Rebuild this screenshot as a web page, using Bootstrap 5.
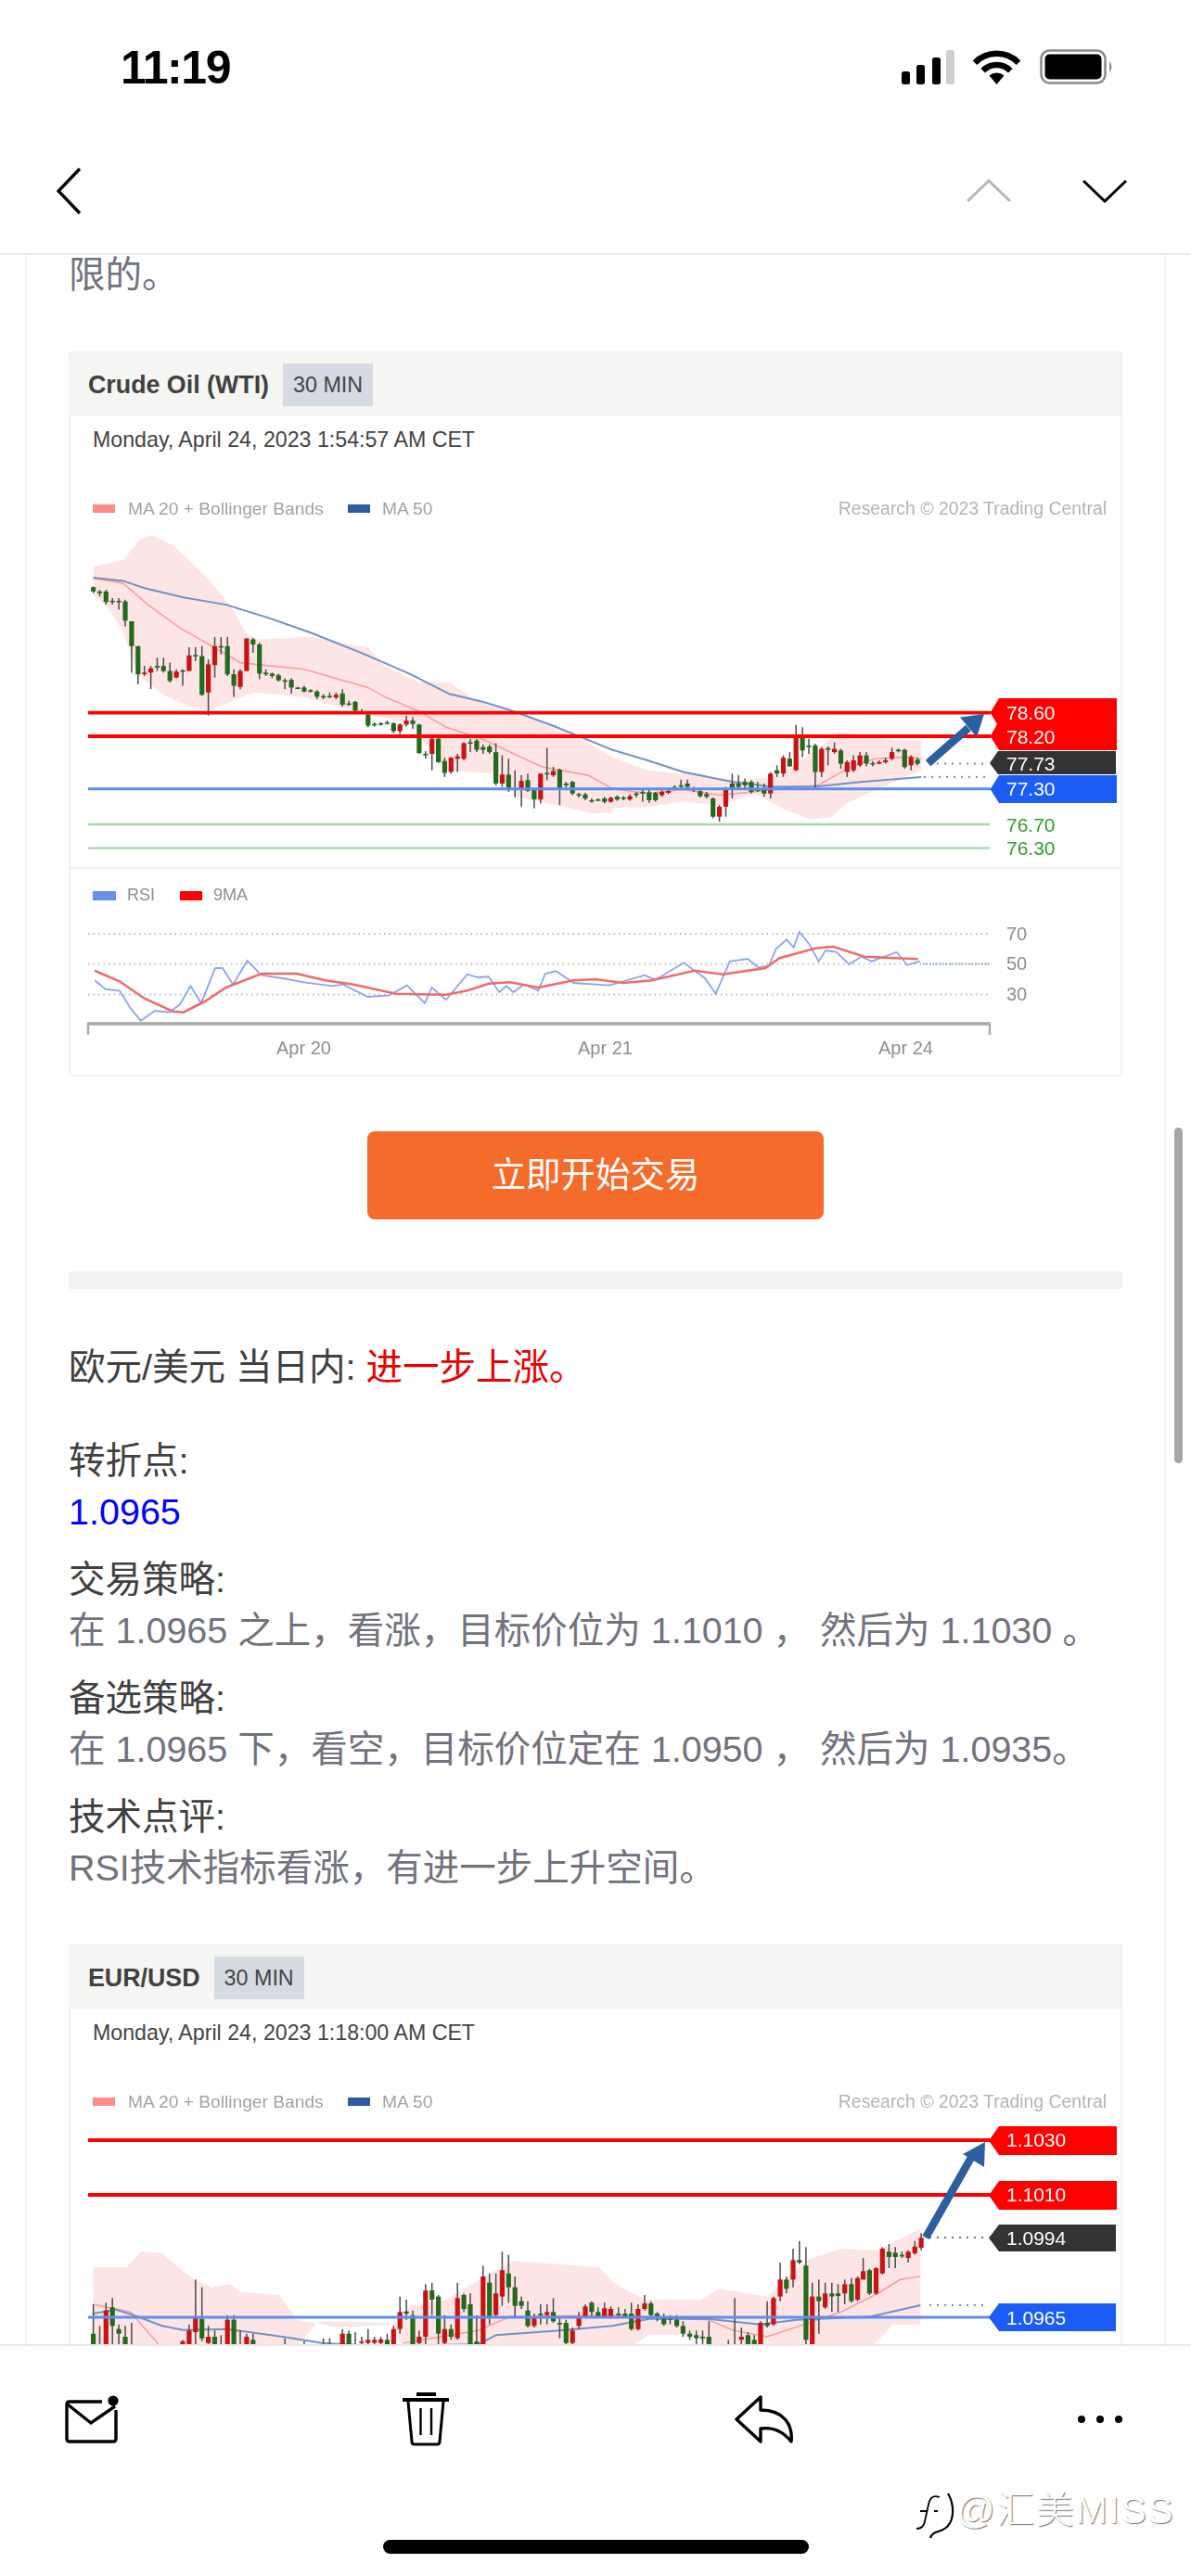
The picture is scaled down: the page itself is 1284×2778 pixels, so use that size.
<!DOCTYPE html>
<html lang="zh">
<head>
<meta charset="utf-8">
<title>邮件</title>
<link rel="stylesheet" href="https://cdn.jsdelivr.net/npm/bootstrap@5.3.0/dist/css/bootstrap.min.css">
<style>
html,body{margin:0;background:#fff}
body{font-family:"Liberation Sans","Noto Sans CJK SC",sans-serif;color:#3c3c3c}
.app-shell{width:1284px;height:2778px;overflow:hidden;position:relative;background:#fff}
.status-row{height:146px;padding:0 82px 0 130px}
.clock{font-size:50px;font-weight:700;color:#000;letter-spacing:-1.4px;line-height:1}
.nav-row{height:129px;padding:0 69px 8px 61px;border-bottom:2px solid #ececec}
.chev-up{margin-right:29px}
.mail-scroll{flex:1 1 auto;min-height:0;overflow:hidden;position:relative}
.mail-frame{margin:0 27px;border-left:2px solid #f0f0f2;border-right:2px solid #f0f0f2;padding:0 45px;min-height:2400px}
.scroll-thumb{position:absolute;left:1266px;top:941px;width:9px;height:362px;border-radius:5px;background:#a6a6a6}
.txt{font-size:39.5px;line-height:55px;margin:0;white-space:nowrap}
.txt-dark{color:#404040}
.txt-grey{color:#72727e}
.txt-red{color:#e60000}
.txt-blue{color:#0000ff}
.first-line{margin-top:-6px}
.chart-card{border:2px solid #f0f3f5;border-radius:0;margin-top:55px;width:1136px}
.chart-head{height:68px;background:#f5f5f3;border:0;border-radius:0!important;padding:0 0 0 19px;gap:15px}
.chart-title{font-size:26.8px;font-weight:700;color:#404040}
.chart-tag{font-size:23.3px;height:46px;line-height:46px;padding:0 11px;background:#d6dae2;color:#444}
.chart-date{height:50px;line-height:50px;font-size:23.2px;color:#444;padding-left:24px}
.chart-draw{display:block;width:1132px;filter:blur(.45px)}
.chart-draw text{font-family:"Liberation Sans",sans-serif}
.chart-one{height:660px}
.chart-two{height:340px}
.cta{display:block;width:492px;height:95px;margin:59px auto 0;background:#f46b2b;border:0;border-radius:8px;color:#fff;font-size:37.5px;line-height:95px;padding:0}
.cta:hover{background:#f46b2b;color:#fff}
.rule-bar{height:19px;background:#f2f2f2;margin-top:56px}
.gap-a{margin-top:57px}
.gap-b{margin-top:46px}
.gap-c{margin-top:18px}
.mail-foot{height:250px;border-top:2px solid #e8e8e8;background:#fff;position:relative;flex:0 0 auto}
.foot-icons{padding:50px 73px 0 70px;height:108px}
.home-pill{width:459px;height:15px;border-radius:8px;background:#000;margin:101px auto 0}
.mark-logo{position:absolute;left:987px;top:157px}
.mark-text{position:absolute;left:1031px;top:154px;font-size:41px;letter-spacing:1.6px;line-height:46px;font-weight:300;color:#fff;text-shadow:1px 1px 1px rgba(0,0,0,.55);white-space:nowrap}
</style>
</head>
<body>
<div class="app-shell d-flex flex-column">
  <div class="status-row d-flex align-items-center justify-content-between flex-shrink-0">
    <span class="clock">11:19</span>
    <svg width="230" height="46" viewBox="973 50 230 46" aria-hidden="true">
      <rect x="973" y="77" width="9" height="14" rx="2.5" fill="#000"/>
      <rect x="989" y="70" width="9" height="21" rx="2.5" fill="#000"/>
      <rect x="1006" y="62" width="9" height="29" rx="2.5" fill="#000"/>
      <rect x="1021" y="54" width="9" height="37" rx="2.5" fill="#cfcfcf"/>
      <path d="M1052 67.7A33 33 0 0 1 1099 67.7M1060.7 76.2A21 21 0 0 1 1090.3 76.2" fill="none" stroke="#000" stroke-width="6.5"/>
      <path d="M1075.5 91L1067.5 81.5A12 12 0 0 1 1083.5 81.5Z" fill="#000"/>
      <rect x="1123.5" y="54.5" width="69" height="35" rx="9" fill="none" stroke="#8a8a8a" stroke-width="2.5"/>
      <rect x="1127.5" y="58.5" width="61" height="27" rx="5" fill="#000"/>
      <path d="M1197 66Q1202 72 1197 78Z" fill="#8a8a8a"/>
    </svg>
  </div>
  <div class="nav-row d-flex align-items-center justify-content-between flex-shrink-0">
    <svg width="28" height="52" viewBox="0 0 28 52" aria-hidden="true"><path d="M25 2L2 26L25 50" fill="none" stroke="#000" stroke-width="3.4"/></svg>
    <div class="d-flex align-items-center gap-5">
      <svg width="48" height="26" viewBox="0 0 48 26" class="chev-up" aria-hidden="true"><path d="M1 24L24 2L47 24" fill="none" stroke="#b5b5b5" stroke-width="3"/></svg>
      <svg width="48" height="26" viewBox="0 0 48 26" aria-hidden="true"><path d="M1 2L24 24L47 2" fill="none" stroke="#000" stroke-width="3"/></svg>
    </div>
  </div>

  <div class="mail-scroll">
    <div class="mail-frame">
      <p class="txt txt-grey first-line">限的。</p>

      <div class="card chart-card">
        <div class="card-header chart-head d-flex align-items-center">
          <span class="chart-title">Crude Oil (WTI)</span><span class="chart-tag">30 MIN</span>
        </div>
        <div class="chart-date">Monday, April 24, 2023 1:54:57 AM CET</div>
        <svg id="oil" class="chart-draw chart-one" viewBox="76 499 1132 660" aria-label="Crude Oil chart">
          <g id="oil-plot"></g>
          <g font-size="19.2" fill="#a2a2a2">
            <rect x="100" y="544" width="24" height="9" fill="#ff8a8a"/>
            <text x="138" y="555">MA 20 + Bollinger Bands</text>
            <rect x="375" y="544" width="24" height="9" fill="#2e5c9e"/>
            <text x="412" y="555">MA 50</text>
            <text x="1193" y="555" text-anchor="end" font-size="19.4" fill="#b4b4b4">Research © 2023 Trading Central</text>
          </g>
          <g fill="none">
            <path d="M95 768.6H1068M95 794H1068" stroke="#ff0000" stroke-width="3.8"/>
            <path d="M95 850.7H1068" stroke="#5b8ef0" stroke-width="3"/>
            <path d="M95 889H1067M95 914.6H1067" stroke="#a6d8a6" stroke-width="2.4"/>
            <path d="M1002 823.6H1066" stroke="#888" stroke-width="2" stroke-dasharray="2 6"/>
            <path d="M996 838H1066" stroke="#6c8fe0" stroke-width="2" stroke-dasharray="2 6"/>
          </g>
          <path d="M1067.6 768.6L1077 753H1204V809H1077L1067.6 794L1075 781Z" fill="#ff0000"/>
          <path d="M1067 823L1076 810H1203V835H1076Z" fill="#333"/>
          <path d="M1067.6 851L1077 836H1204V866H1077Z" fill="#1a5cf5"/>
          <path d="M1000.6 823L1044 785" stroke="#2c5f9e" stroke-width="8.5" fill="none"/>
          <path d="M1061 770L1035 773.5L1053 795Z" fill="#2c5f9e"/>
          <g font-size="21" fill="#fff">
            <text x="1085" y="776">78.60</text>
            <text x="1085" y="802">78.20</text>
            <text x="1085" y="831">77.73</text>
            <text x="1085" y="858">77.30</text>
            <text x="1085" y="897" fill="#2e9e2e">76.70</text>
            <text x="1085" y="922" fill="#2e9e2e">76.30</text>
          </g>
          <path d="M76 936H1208" stroke="#edf1f4" stroke-width="2.5"/>
          <g font-size="18" fill="#8e8e8e">
            <rect x="100" y="961" width="25" height="10" fill="#6c8fe8"/>
            <text x="137" y="971">RSI</text>
            <rect x="194" y="961" width="24" height="10" fill="#ff0000"/>
            <text x="230" y="971">9MA</text>
          </g>
          <path d="M95 1007H1067M95 1039.5H1067M95 1072.5H1067" stroke="#bdbdbd" stroke-width="2" stroke-dasharray="1.5 4" fill="none"/>
          <path d="M995 1039.5H1067" stroke="#7d9ee8" stroke-width="2" stroke-dasharray="1.5 2"/>
          <polyline id="rsi-blue" fill="none" stroke="#8aa6ec" stroke-width="1.8"/>
          <polyline id="rsi-red" fill="none" stroke="#f26a6a" stroke-width="2.6"/>
          <path d="M95 1116V1104H1067V1116" fill="none" stroke="#ababab" stroke-width="2.4"/>
          <path d="M95 1104H1067" stroke="#ababab" stroke-width="3.6"/>
          <g font-size="20" fill="#8e8e8e">
            <text x="1085" y="1014">70</text>
            <text x="1085" y="1046">50</text>
            <text x="1085" y="1079">30</text>
            <text x="298" y="1137">Apr 20</text>
            <text x="623" y="1137">Apr 21</text>
            <text x="947" y="1137">Apr 24</text>
          </g>
        </svg>
      </div>

      <a class="btn cta" href="#">立即开始交易</a>
      <div class="rule-bar"></div>

      <p class="txt txt-dark gap-a">欧元/美元 当日内: <span class="txt-red">进一步上涨。</span></p>
      <p class="txt txt-dark gap-b">转折点:</p>
      <p class="txt txt-blue">1.0965</p>
      <p class="txt txt-dark gap-c">交易策略:</p>
      <p class="txt txt-grey">在 1.0965 之上，看涨，目标价位为 1.1010 ， 然后为 1.1030 。</p>
      <p class="txt txt-dark gap-c">备选策略:</p>
      <p class="txt txt-grey">在 1.0965 下，看空，目标价位定在 1.0950 ， 然后为 1.0935。</p>
      <p class="txt txt-dark gap-c">技术点评:</p>
      <p class="txt txt-grey">RSI技术指标看涨，有进一步上升空间。</p>

      <div class="card chart-card">
        <div class="card-header chart-head d-flex align-items-center">
          <span class="chart-title">EUR/USD</span><span class="chart-tag">30 MIN</span>
        </div>
        <div class="chart-date">Monday, April 24, 2023 1:18:00 AM CET</div>
        <svg id="eur" class="chart-draw chart-two" viewBox="76 2217 1132 340" aria-label="EUR/USD chart">
          <g id="eur-plot"></g>
          <g font-size="19.2" fill="#a2a2a2">
            <rect x="100" y="2262" width="24" height="9" fill="#ff8a8a"/>
            <text x="138" y="2273">MA 20 + Bollinger Bands</text>
            <rect x="375" y="2262" width="24" height="9" fill="#2e5c9e"/>
            <text x="412" y="2273">MA 50</text>
            <text x="1193" y="2273" text-anchor="end" font-size="19.4" fill="#b4b4b4">Research © 2023 Trading Central</text>
          </g>
          <g fill="none">
            <path d="M95 2308H1068M95 2367H1068" stroke="#ff0000" stroke-width="3.8"/>
            <path d="M95 2499H1068" stroke="#5b8ef0" stroke-width="3"/>
            <path d="M1002 2413H1066" stroke="#7a6a80" stroke-width="2" stroke-dasharray="2 6"/>
            <path d="M1002 2486H1066" stroke="#6c8fe0" stroke-width="2" stroke-dasharray="2 6"/>
          </g>
          <path d="M1066 2308.5L1077 2293H1204V2324H1077Z" fill="#ff0000"/>
          <path d="M1066 2367.5L1077 2352H1204V2383H1077Z" fill="#ff0000"/>
          <path d="M1066 2413.5L1077 2399H1203V2428H1077Z" fill="#333"/>
          <path d="M1066 2499L1077 2484H1203V2514H1077Z" fill="#1a5cf5"/>
          <path d="M998 2413L1048 2325" stroke="#2c5f9e" stroke-width="8.5" fill="none"/>
          <path d="M1062 2310L1038 2323L1061 2337Z" fill="#2c5f9e"/>
          <g font-size="21" fill="#fff">
            <text x="1085" y="2315">1.1030</text>
            <text x="1085" y="2374">1.1010</text>
            <text x="1085" y="2421">1.0994</text>
            <text x="1085" y="2507">1.0965</text>
          </g>
        </svg>
      </div>
    </div>
    <div class="scroll-thumb"></div>
  </div>

  <div class="mail-foot">
    <div class="foot-icons d-flex align-items-center justify-content-between">
      <svg width="58" height="52" viewBox="0 0 58 52" aria-hidden="true">
        <path d="M40 7H5Q2 7 2 10V47Q2 50 5 50H52Q55 50 55 47V16" fill="none" stroke="#000" stroke-width="3.4"/>
        <path d="M3 10L28 30L54 12" fill="none" stroke="#000" stroke-width="3.4"/>
        <circle cx="52" cy="6" r="5.6" fill="#000"/>
      </svg>
      <svg width="52" height="58" viewBox="0 0 52 58" aria-hidden="true">
        <rect x="16" y="0" width="21" height="4" fill="#000"/>
        <rect x="1" y="6" width="50" height="4" fill="#000"/>
        <path d="M7 10L11 53Q11 56 14 56H38Q41 56 41 53L45 10" fill="none" stroke="#000" stroke-width="3"/>
        <path d="M20.5 17V46M32 17V46" stroke="#000" stroke-width="2.4"/>
      </svg>
      <svg width="66" height="52" viewBox="0 0 66 52" aria-hidden="true">
        <path d="M30 2L4 26L30 50V36C44 34 55 40 63 50C65 32 55 16 30 16Z" fill="none" stroke="#000" stroke-width="3.4" stroke-linejoin="round"/>
      </svg>
      <svg width="50" height="10" viewBox="0 0 50 10" aria-hidden="true">
        <circle cx="5" cy="5" r="4" fill="#000"/><circle cx="25" cy="5" r="4" fill="#000"/><circle cx="45" cy="5" r="4" fill="#000"/>
      </svg>
    </div>
    <div class="home-pill"></div>
    <svg class="mark-logo" width="44" height="54" viewBox="0 0 44 54" aria-hidden="true">
      <path d="M26 6C18 3 15 8 14 14L10 32C9 38 5 40 1 40M5 21H13M20 21H24" fill="none" stroke="#000" stroke-width="1.8"/>
      <path d="M35 2C42 14 42 30 34 38C28 44 18 42 16 50" fill="none" stroke="#000" stroke-width="2.2"/>
    </svg>
    <span class="mark-text">@汇美MISS</span>
  </div>
</div>

<script src="https://cdn.jsdelivr.net/npm/bootstrap@5.3.0/dist/js/bootstrap.bundle.min.js"></script>
<script>
(function(){
  var G='#256a1c',R='#c91212',W='#4a4a4a';
  function poly(p){return p.map(function(a){return a[0].toFixed(1)+','+a[1].toFixed(1)}).join(' ')}
  function conv(fx,fy,list){return list.map(function(a){return [fx(a[0]),fy(a[1])]})}
  function candle(x,c,t,b,h,l){
    return '<path d="M'+x.toFixed(1)+' '+h.toFixed(1)+'V'+l.toFixed(1)+'" stroke="'+W+'" stroke-width="1.5"/>'+
      '<rect x="'+(x-2.6).toFixed(1)+'" y="'+t.toFixed(1)+'" width="5.2" height="'+Math.max(b-t,1.6).toFixed(1)+'" fill="'+(c=='r'?R:G)+'"/>';
  }
  /* ---------- Crude oil ---------- */
  var a2=function(X){return 60+X/2.613},a3=function(X){return 660+X/2.613},ay=function(Y){return 370+Y/2.8};
  var top1=conv(a2,ay,[[106,675],[190,655],[240,590],[270,580],[330,610],[420,700],[490,790],[540,880],[570,895],[720,887],[880,920],[920,970],[1020,1022],[1110,1025],[1170,1070],[1280,1110],[1400,1160],[1480,1195],[1568,1250]])
    .concat(conv(a3,ay,[[0,1250],[100,1290],[250,1305],[350,1320],[460,1310],[540,1255],[640,1175],[800,1200],[870,1200],[870,1290],[760,1340],[660,1390],[620,1430],[560,1440],[480,1405],[400,1360],[300,1395],[200,1385],[100,1400],[0,1405]]))
    .concat(conv(a2,ay,[[1568,1418],[1510,1420],[1430,1400],[1300,1370],[1240,1300],[1100,1290],[1000,1150],[840,1110],[700,1070],[560,1055],[510,1075],[430,1110],[370,1095],[300,1060],[230,1000],[190,870],[140,790],[106,760]]));
  var ma50=conv(a2,ay,[[106,708],[190,718],[250,740],[360,768],[480,790],[600,830],[720,875],[860,935],[1000,1000],[1110,1060],[1200,1082],[1280,1108],[1400,1155],[1568,1228]])
    .concat(conv(a3,ay,[[100,1260],[200,1295],[340,1325],[450,1340],[580,1338],[700,1325],[870,1310]]));
  var ma20=conv(a2,ay,[[106,710],[190,725],[260,790],[350,860],[440,915],[520,965],[580,972],[700,985],[880,1040],[930,1070],[1020,1110],[1100,1160],[1200,1195],[1280,1235],[1370,1280],[1500,1305],[1568,1345]])
    .concat(conv(a3,ay,[[100,1360],[200,1348],[300,1365],[400,1355],[480,1345],[580,1335],[680,1275],[740,1255],[840,1250],[870,1255]]));
  var c1a='g737 750 735 755;g750 755 745 765;g750 782 745 790;g778 782 770 790;g778 782 770 805;g780 838 775 855;g840 915 840 995;g915 1000 915 1030;r995 998 975 1005;r982 995 975 1045;g975 980 950 990;g975 990 950 995;g990 1020 965 1025;r992 1010 985 1012;g988 992 985 1035;r943 990 918 990;g942 945 918 960;g945 1062 915 1065;r970 1055 955 1125;r915 972 888 1010;g915 918 888 940;g915 1000 888 1005;g1000 1035 985 1068;r990 1038 985 1045;r892 990 890 990;g895 910 890 935;g910 998 905 1015;g995 1000 985 1005;g998 1005 995 1012;g1003 1018 998 1022;g1018 1020 1012 1045;g1017 1040 1012 1058;g1040 1042 1038 1045;g1040 1052 1035 1055;g1048 1052 1045 1055;g1052 1068 1048 1075;g1066 1068 1060 1075;g1065 1068 1055 1072;r1062 1070 1055 1075;g1058 1092 1045 1098;g1088 1090 1080 1095;g1083 1110 1080 1115;g1112 1115 1105 1120;g1122 1155 1120 1160;g1150 1153 1145 1158;g1148 1150 1145 1155;g1145 1148 1140 1152;g1148 1172 1145 1178;r1152 1172 1148 1180;r1140 1152 1125 1158;g1140 1150 1130 1165;g1152 1238 1150 1240;g1240 1244 1232 1254;r1195 1240 1190 1290;g1195 1265 1190 1268;g1262 1298 1252 1310;r1252 1295 1250 1300;r1248 1255 1240 1295;r1208 1255 1205 1260;g1205 1208 1195 1235;g1200 1228 1195 1235;g1220 1228 1212 1240;g1218 1235 1212 1240;g1235 1330 1208 1335;r1303 1330 1245 1340;g1303 1350 1255 1355;g1345 1348 1290 1372;r1322 1348 1305 1400;g1320 1352 1300 1355;g1350 1378 1345 1405;r1300 1378 1300 1390;g1298 1302 1222 1320;r1292 1305 1280 1310;g1288 1345 1285 1395;g1330 1335 1325 1350;g1325 1360 1322 1365;g1362 1365 1358 1372;g1363 1375 1358 1380;g1380 1382 1375 1388;g1378 1380 1375 1382;g1375 1385 1370 1390;r1373 1385 1370 1388';
  var c1b='g1370 1378 1365 1382;g1372 1376 1368 1380;r1368 1378 1362 1382;g1360 1365 1355 1372;g1355 1360 1350 1385;g1356 1380 1350 1388;g1358 1380 1355 1385;r1355 1365 1350 1370;r1352 1358 1348 1362;g1340 1345 1335 1350;g1335 1338 1318 1345;g1330 1340 1318 1350;g1345 1350 1340 1355;g1353 1368 1350 1372;g1362 1370 1355 1375;g1375 1430 1372 1435;r1400 1430 1395 1445;r1345 1400 1340 1430;g1330 1345 1300 1375;g1330 1340 1305 1345;g1325 1335 1315 1345;g1325 1355 1320 1360;g1345 1352 1325 1355;g1345 1360 1330 1370;r1300 1360 1295 1375;g1290 1300 1275 1310;r1252 1300 1245 1310;g1255 1278 1235 1280;r1185 1290 1152 1292;g1190 1230 1160 1250;g1215 1220 1195 1240;g1215 1295 1210 1345;r1225 1295 1220 1310;g1223 1228 1218 1275;r1225 1235 1205 1240;g1230 1270 1225 1285;r1265 1295 1260 1310;r1260 1290 1245 1295;r1245 1275 1235 1280;g1245 1270 1235 1278;g1268 1272 1262 1278;r1265 1270 1260 1272;r1260 1266 1252 1270;r1235 1255 1222 1260;g1228 1232 1224 1236;g1228 1280 1225 1285;r1250 1275 1245 1290;g1258 1270 1252 1275';
  function row(s,start,step,fx,fy){
    return s.split(';').map(function(e,i){
      var c=e[0],v=e.slice(1).split(' ').map(Number);
      return candle(fx(start+i*step),c,fy(v[0]),fy(v[1]),fy(v[2]),fy(v[3]));
    }).join('');
  }
  document.getElementById('oil-plot').innerHTML=
    '<polygon points="'+poly(top1)+'" fill="#fde5e5"/>'+
    '<polyline points="'+poly(ma20)+'" fill="none" stroke="#ff9c9c" stroke-width="1.6"/>'+
    '<polyline points="'+poly(ma50)+'" fill="none" stroke="#6f93c4" stroke-width="2"/>'+
    row(c1a,106,18,a2,ay)+row(c1b,14,18,a3,ay);

  var rx=function(X){return 60+X/1.307},ry=function(Y){return 920+Y/3};
  document.getElementById('rsi-blue').setAttribute('points',poly(conv(rx,ry,[[55,412],[70,440],[90,445],[105,500],[120,542],[140,510],[160,515],[175,490],[190,430],[205,485],[225,372],[235,372],[250,425],[270,348],[290,395],[320,405],[350,418],[390,430],[405,425],[440,465],[470,460],[495,428],[520,485],[530,435],[550,475],[580,392],[595,402],[610,400],[625,450],[635,430],[645,450],[660,425],[680,445],[690,390],[705,382],[730,420],[780,428],[830,395],[845,410],[885,355],[915,405],[930,455],[950,350],[975,342],[990,370],[1005,365],[1015,310],[1030,280],[1040,305],[1048,255],[1062,295],[1075,350],[1085,315],[1100,320],[1118,360],[1135,335],[1150,350],[1185,320],[1200,362],[1218,350]])));
  document.getElementById('rsi-red').setAttribute('points',poly(conv(rx,ry,[[55,380],[90,415],[125,470],[165,512],[180,515],[210,480],[240,435],[290,390],[340,390],[380,412],[420,425],[480,455],[550,458],[580,445],[610,422],[640,418],[680,435],[730,412],[760,408],[800,420],[840,412],[900,380],[940,392],[1000,372],[1020,340],[1070,308],[1095,302],[1140,335],[1215,343]])));

  /* ---------- EUR/USD ---------- */
  var b5=function(X){return 60+X/2.613},b6=function(X){return 660+X/2.513},by=function(Y){return 2080+Y/3};
  var band=conv(b5,by,[[106,1095],[200,1095],[240,1045],[300,1050],[360,1110],[400,1140],[440,1160],[490,1150],[520,1175],[630,1185],[680,1265],[800,1290],[950,1280],[1000,1220],[1100,1200],[1200,1130],[1290,1075],[1530,1095],[1568,1140]])
    .concat(conv(b6,by,[[0,1140],[40,1170],[90,1200],[240,1200],[290,1165],[420,1190],[500,1100],[530,1070],[620,1035],[720,1040],[835,970],[835,1282],[760,1282],[710,1345]]))
    .concat([[946,2530],[766,2530],[745,2518],[700,2518],[680,2530],[434,2530],[420,2505],[344,2503],[320,2530],[100,2560]]);
  var m50=conv(b5,by,[[106,1245],[170,1232],[220,1250],[300,1285],[360,1298],[480,1295],[640,1320],[750,1340],[900,1350],[1190,1345],[1240,1315],[1420,1300],[1568,1285]])
    .concat(conv(b6,by,[[100,1262],[260,1262],[400,1280],[500,1265],[700,1255],[835,1218]]));
  var m20=conv(b5,by,[[106,1215],[210,1240],[290,1345],[320,1390]]);
  var m20b=conv(b5,by,[[980,1340],[1190,1300],[1280,1255],[1568,1250]])
    .concat(conv(b6,by,[[260,1265],[330,1300],[420,1320],[520,1280],[620,1240],[720,1180],[780,1135],[835,1125]]));
  var c2=[
   'a',106,'g1310 1360 1215 1360',124,'g1360 1360 1285 1360',142,'r1235 1360 1210 1360',160,'g1225 1285 1195 1360',178,'g1295 1310 1280 1360',196,'g1320 1360 1285 1360',214,'g1360 1360 1275 1360',358,'r1335 1360 1330 1360',376,'r1300 1360 1280 1360',394,'r1260 1305 1135 1360',412,'g1262 1325 1160 1335',430,'r1320 1340 1285 1360',448,'g1320 1360 1300 1360',466,'g1360 1360 1315 1360',484,'r1265 1360 1250 1360',502,'g1265 1360 1250 1360',520,'g1360 1360 1300 1360',538,'r1320 1360 1310 1360',556,'g1330 1360 1310 1360',646,'g1360 1360 1325 1360',700,'g1360 1360 1335 1360',754,'g1360 1360 1325 1360',772,'g1360 1360 1325 1360',808,'r1310 1360 1295 1360',826,'g1310 1360 1300 1360',844,'g1360 1360 1305 1360',862,'r1335 1340 1320 1360',880,'r1330 1340 1295 1360',898,'r1330 1340 1320 1360',916,'r1328 1340 1320 1360',934,'g1330 1360 1310 1360',952,'r1295 1360 1285 1360',970,'r1240 1295 1190 1310',988,'g1238 1245 1200 1265',1006,'g1250 1360 1235 1360',1024,'r1320 1340 1300 1360',1042,'r1170 1320 1150 1345',1060,'g1170 1200 1145 1250',1078,'g1190 1310 1185 1345',1096,'r1295 1340 1250 1345',1114,'g1295 1320 1280 1330',1132,'r1195 1325 1145 1330',1150,'g1185 1230 1180 1240',1168,'g1215 1360 1180 1360',1186,'g1335 1360 1250 1360',1204,'r1125 1360 1090 1360',1222,'g1145 1260 1115 1280',1240,'r1180 1250 1115 1255',1258,'r1105 1190 1045 1220',1276,'g1115 1160 1055 1210',1294,'g1160 1220 1125 1260',1312,'g1205 1220 1190 1230',1330,'g1235 1285 1205 1290',1348,'r1255 1285 1245 1290',1366,'g1245 1250 1215 1280',1384,'r1240 1250 1215 1280',1402,'g1240 1270 1195 1275',1420,'g1275 1280 1260 1325',1438,'g1275 1340 1265 1345',1456,'r1300 1340 1290 1345',1474,'r1260 1285 1240 1295',1492,'r1222 1255 1215 1260',1510,'g1210 1240 1205 1255',1528,'g1240 1255 1225 1260',1546,'r1228 1255 1210 1260',1564,'r1230 1255 1222 1262',
   'b',17,'g1245 1250 1225 1260',35,'g1245 1255 1230 1260',52,'g1245 1295 1210 1300',70,'r1230 1295 1215 1300',88,'r1212 1230 1185 1235',105,'g1212 1250 1205 1260',122,'g1245 1260 1240 1270',140,'g1258 1280 1245 1285',157,'g1258 1265 1250 1280',175,'g1265 1285 1250 1290',192,'g1285 1310 1270 1320',210,'g1310 1320 1300 1330',228,'g1315 1325 1300 1345',245,'g1320 1325 1300 1345',262,'g1320 1360 1270 1360',315,'g1360 1360 1330 1360',332,'g1360 1360 1195 1360',350,'r1320 1330 1290 1345',368,'g1315 1360 1305 1360',385,'g1330 1360 1315 1360',402,'r1275 1360 1270 1360',420,'g1275 1285 1205 1290',437,'r1195 1280 1190 1285',455,'r1135 1190 1080 1205',472,'g1135 1165 1125 1180',490,'r1072 1135 1035 1160',507,'g1072 1080 1010 1085',525,'g1090 1330 1030 1360',542,'r1190 1360 1145 1360',560,'g1190 1205 1135 1310',577,'r1180 1225 1145 1230',595,'g1180 1190 1145 1240',612,'g1180 1188 1150 1240',630,'r1150 1180 1135 1215',648,'g1150 1205 1130 1210',665,'r1130 1200 1125 1205',680,'r1108 1135 1065 1135',697,'g1105 1180 1100 1185',715,'r1098 1180 1095 1185',732,'r1035 1115 1030 1118',750,'g1045 1062 1020 1098',767,'g1048 1062 1030 1098',785,'g1055 1060 1045 1065',802,'r1045 1065 1040 1080',820,'r1028 1050 1010 1055',837,'r1000 1032 985 1040'];
  var out='',fx=b5;
  c2.forEach(function(e,i,arr){
    if(e==='a'){fx=b5;return}
    if(e==='b'){fx=b6;return}
    if(typeof e==='number'){
      var s=arr[i+1],c=s[0],v=s.slice(1).split(' ').map(Number);
      if(v[0]===v[1]){ out+='<path d="M'+fx(e).toFixed(1)+' '+by(v[2]).toFixed(1)+'V'+by(v[3]).toFixed(1)+'" stroke="'+W+'" stroke-width="1.5"/>'; }
      else{ out+=candle(fx(e),c,by(v[0]),by(v[1]),by(v[2]),by(v[3])); }
    }
  });
  document.getElementById('eur-plot').innerHTML=
    '<polygon points="'+poly(band)+'" fill="#fde5e5"/>'+
    '<polyline points="'+poly(m20)+'" fill="none" stroke="#ff9c9c" stroke-width="1.6"/>'+
    '<polyline points="'+poly(m20b)+'" fill="none" stroke="#ff9c9c" stroke-width="1.6"/>'+
    '<polyline points="'+poly(m50)+'" fill="none" stroke="#6f93c4" stroke-width="2"/>'+out;
})();
</script>
</body>
</html>
